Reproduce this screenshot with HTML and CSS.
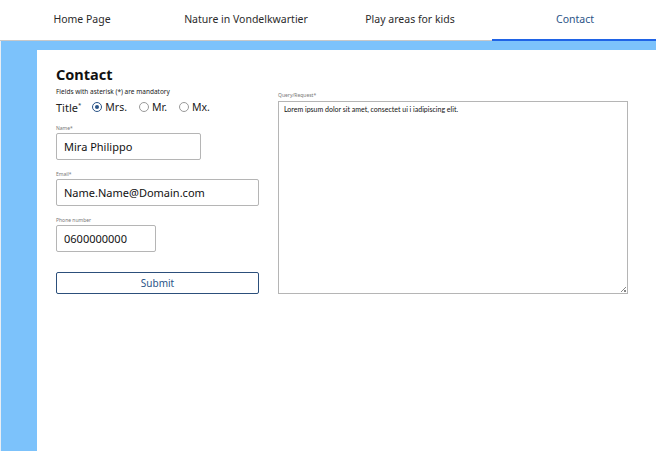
FILE: index.html
```html
<!DOCTYPE html>
<html lang="en">
<head>
<meta charset="utf-8">
<title>Contact</title>
<link rel="stylesheet" href="styles.css">
</head>
<body>
<nav class="nav">
  <a class="nav-item">Home Page</a>
  <a class="nav-item">Nature in Vondelkwartier</a>
  <a class="nav-item">Play areas for kids</a>
  <a class="nav-item active">Contact</a>
</nav>
<main class="stage">
  <section class="panel">
    <div class="col-left">
      <h1 class="title">Contact</h1>
      <p class="note">Fields with asterisk (*) are mandatory</p>
      <div class="title-row">
        <span class="title-label">Title<sup>*</sup></span>
        <label class="radio"><span class="dot checked"></span>Mrs.</label>
        <label class="radio"><span class="dot"></span>Mr.</label>
        <label class="radio"><span class="dot"></span>Mx.</label>
      </div>
      <div class="field first">
        <span class="label">Name*</span>
        <div class="input w-name">Mira Philippo</div>
      </div>
      <div class="field">
        <span class="label">Email*</span>
        <div class="input w-email">Name.Name@Domain.com</div>
      </div>
      <div class="field">
        <span class="label">Phone number</span>
        <div class="input w-phone">0600000000</div>
      </div>
      <button class="submit">Submit</button>
    </div>
    <div class="col-right">
      <span class="label">Query/Request*</span>
      <div class="textarea">Lorem ipsum dolor sit amet, consectet ui i iadipiscing elit.<span class="grip"></span></div>
    </div>
  </section>
</main>
</body>
</html>
```

FILE: styles.css
```css
* { box-sizing: border-box; }
html, body { margin: 0; padding: 0; height: 100%; }
body {
  font-family: "Noto Sans", "Open Sans", sans-serif;
  color: #222;
  background: #fff;
  display: flex;
  flex-direction: column;
  overflow: hidden;
}
.nav {
  display: grid;
  grid-template-columns: repeat(4, 1fr);
  height: 41px;
  border-bottom: 1px solid #c8c8c8;
}
.nav-item {
  display: flex;
  align-items: center;
  justify-content: center;
  font-size: 10.5px;
  color: #2b2b2b;
  padding-bottom: 3px;
}
.nav-item.active {
  color: #2a5487;
  border-bottom: 2px solid #1f63e6;
  margin-bottom: -1px;
  padding-bottom: 2px;
  padding-left: 2px;
}
.stage {
  flex: 1;
  background: #7cc2fb;
  padding: 9px 0 0 36px;
  border-left: 1px solid #e8eef4;
  display: flex;
}
.panel {
  flex: 1;
  background: #fff;
  display: flex;
  gap: 18px;
  padding: 15px 0 0 19px;
}
.col-left { width: 204px; display: flex; flex-direction: column; }
.title { margin: 0; font-size: 14.5px; font-weight: 700; line-height: 18px; color: #111; }
.note { margin: 4px 0 0; font-size: 6.5px; line-height: 9px; color: #222; }
.title-row { display: flex; align-items: center; margin-top: 4px; height: 14px; }
.title-label { font-size: 11px; margin-right: 11px; color: #222; }
.title-label sup { font-size: 6px; vertical-align: 5px; }
.radio { display: flex; align-items: center; font-size: 10.5px; margin-right: 12px; color: #222; }
.dot {
  width: 10px; height: 10px; border-radius: 50%;
  border: 1px solid #9a9a9a; margin-right: 3px; position: relative;
}
.dot.checked { border-color: #2a5487; }
.dot.checked::after {
  content: ""; position: absolute; left: 2px; top: 2px;
  width: 4px; height: 4px; border-radius: 50%; background: #2a5487;
}
.field { display: flex; flex-direction: column; margin-top: 11px; }
.field.first { margin-top: 11px; }
.label { font-size: 5px; line-height: 7px; color: #777; margin-bottom: 1px; }
.input {
  height: 27px; border: 1px solid #b5b5b5; border-radius: 2px;
  display: flex; align-items: center; padding-left: 7px;
  font-size: 11px; color: #111;
}
.w-name { width: 145px; }
.w-email { width: 203px; }
.w-phone { width: 100px; }
.submit {
  margin-top: 20px; height: 22px; width: 203px;
  background: #fff; border: 1px solid #2c4f7b; border-radius: 2px;
  color: #2a5487; font-family: inherit; font-size: 10px; padding: 0;
}
.col-right { display: flex; flex-direction: column; padding-top: 27px; }
.col-right .label { margin-bottom: 2px; }
.textarea {
  width: 350px; height: 193px; border: 1px solid #b5b5b5;
  font-family: "Lato", sans-serif; font-size: 7px; color: #111;
  padding: 3px 5px; position: relative;
}
.grip {
  position: absolute; right: 1px; bottom: 1px; width: 5px; height: 5px;
  background: linear-gradient(135deg, transparent 45%, #888 45%, #888 55%, transparent 55%, transparent 70%, #888 70%);
}
```
